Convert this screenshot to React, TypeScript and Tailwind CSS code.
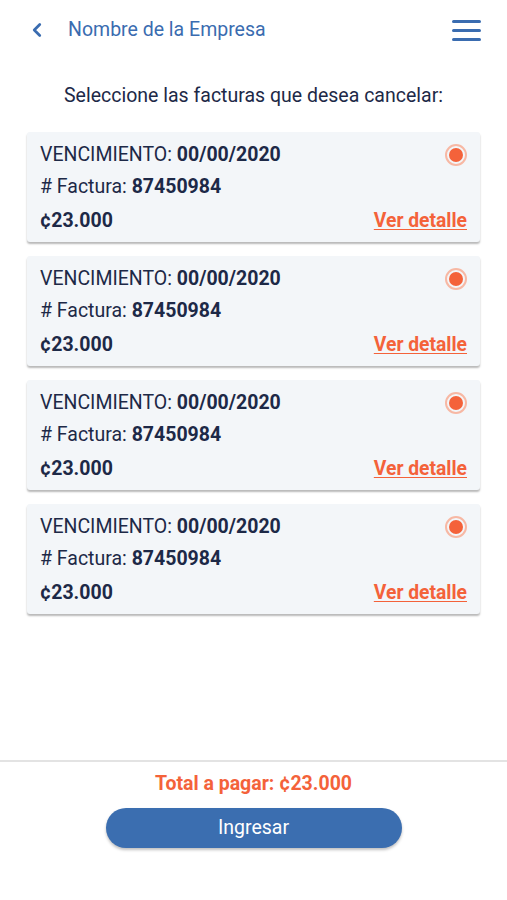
import { ChevronLeft } from "lucide-react";

const invoices = [
  { id: 1, due: "00/00/2020", number: "87450984", amount: "¢23.000" },
  { id: 2, due: "00/00/2020", number: "87450984", amount: "¢23.000" },
  { id: 3, due: "00/00/2020", number: "87450984", amount: "¢23.000" },
  { id: 4, due: "00/00/2020", number: "87450984", amount: "¢23.000" },
];

function Radio() {
  return (
    <span className="flex h-[22px] w-[22px] items-center justify-center rounded-full border-2 border-[#f7b8a4]">
      <span className="h-[14px] w-[14px] rounded-full bg-[#f4623a]" />
    </span>
  );
}

function InvoiceCard({ due, number, amount }: { due: string; number: string; amount: string }) {
  return (
    <div className="rounded-[3px] bg-[#f3f6f9] px-[13px] pt-[8px] pb-[4px] shadow-[0_2px_2px_rgba(0,0,0,0.28)]">
      <div className="flex items-center justify-between">
        <p className="text-[19.5px] leading-[30px]">
          VENCIMIENTO: <span className="font-bold">{due}</span>
        </p>
        <Radio />
      </div>
      <p className="text-[19.5px] leading-[34px]">
        # Factura: <span className="font-bold">{number}</span>
      </p>
      <div className="flex items-center justify-between">
        <p className="text-[19.5px] font-bold leading-[34px]">{amount}</p>
        <a className="text-[19.3px] font-bold leading-[34px] text-[#f4623a] underline underline-offset-[2px]">
          Ver detalle
        </a>
      </div>
    </div>
  );
}

export default function App() {
  return (
    <div className="flex h-[900px] flex-col bg-white font-['Roboto',sans-serif] text-[#1d2947]">
      <header className="flex h-[60px] items-center justify-between pl-[26px] pr-[26px]">
        <div className="flex items-center">
          <ChevronLeft className="h-[22px] w-[22px] text-[#3a6cb0]" strokeWidth={3} />
          <h1 className="ml-[20px] text-[19.5px] text-[#3a6cb0]">Nombre de la Empresa</h1>
        </div>
        <div className="flex w-[29px] flex-col gap-[6px]">
          <span className="h-[3px] rounded-sm bg-[#3a6cb0]" />
          <span className="h-[3px] rounded-sm bg-[#3a6cb0]" />
          <span className="h-[3px] rounded-sm bg-[#3a6cb0]" />
        </div>
      </header>

      <p className="mt-[22px] text-center text-[19.5px] leading-[28px]">
        Seleccione las facturas que desea cancelar:
      </p>

      <main className="mx-[27px] mt-[22px] flex flex-col gap-[14px]">
        {invoices.map((inv) => (
          <InvoiceCard key={inv.id} due={inv.due} number={inv.number} amount={inv.amount} />
        ))}
      </main>

      <div className="flex-1" />

      <footer className="flex h-[140px] flex-col items-center border-t-2 border-[#e3e3e3] pt-[8px]">
        <p className="text-[19.5px] font-bold leading-[28px] text-[#f4623a]">Total a pagar: ¢23.000</p>
        <button className="mt-[10px] h-[40px] w-[296px] rounded-full bg-[#3b6eb0] text-[19.5px] text-white shadow-[0_2px_3px_rgba(0,0,0,0.25)]">
          Ingresar
        </button>
      </footer>
    </div>
  );
}
